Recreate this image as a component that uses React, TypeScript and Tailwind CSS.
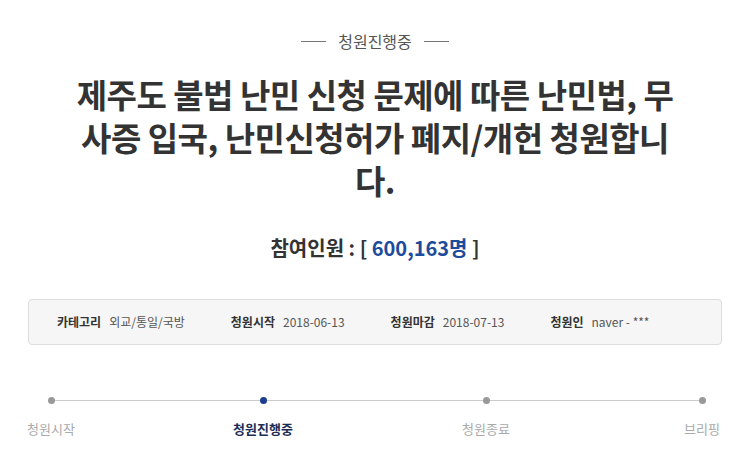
const steps = [
  { label: '청원시작', active: false, ml: 'ml-0' },
  { label: '청원진행중', active: true, ml: 'ml-[152px]' },
  { label: '청원종료', active: false, ml: 'ml-[163px]' },
  { label: '브리핑', active: false, ml: 'ml-[156px]' },
];

const info = [
  { label: '카테고리', value: '외교/통일/국방' },
  { label: '청원시작', value: '2018-06-13' },
  { label: '청원마감', value: '2018-07-13' },
  { label: '청원인', value: 'naver - ***' },
];

export default function App() {
  return (
    <div
      className="w-[750px] h-[461px] bg-white overflow-hidden"
      style={{ fontFamily: '"Noto Sans CJK KR", "Noto Sans", sans-serif' }}
    >
      {/* status heading */}
      <div className="flex items-center justify-center gap-3 pt-[29px]">
        <span className="w-[25px] h-px bg-[#777]" />
        <span className="text-[16px] leading-6 text-[#555]">청원진행중</span>
        <span className="w-[25px] h-px bg-[#777]" />
      </div>

      <h1 className="mx-auto mt-[20px] max-w-[610px] text-center text-[33px] font-bold leading-[43px] text-[#333] tracking-[-0.5px]">
        제주도 불법 난민 신청 문제에 따른 난민법, 무사증 입국, 난민신청허가 폐지/개헌 청원합니다.
      </h1>

      <div className="mt-[32px] text-center text-[20px] font-bold leading-7 text-[#333]">
        참여인원 : [ <span className="text-[#1d4b9b]">600,163명</span> ]
      </div>

      <div className="mx-[28px] mt-[37px] flex h-[46px] items-center gap-[46px] rounded border border-[#ddd] bg-[#f6f6f6] pl-[28px] text-[12px]">
        {info.map((it) => (
          <div key={it.label} className="flex items-center gap-2">
            <span className="font-bold text-[#333]">{it.label}</span>
            <span className="text-[#555]">{it.value}</span>
          </div>
        ))}
      </div>

      <div className="relative mt-[52px] pl-[21px]">
        <div className="absolute left-[51px] right-[48px] top-[3px] h-px bg-[#ccc]" />
        <div className="relative flex">
          {steps.map((s) => (
            <div key={s.label} className={`${s.ml} flex w-[60px] flex-col items-center`}>
              <span
                className={`h-[7px] w-[7px] rounded-full ${s.active ? 'bg-[#1d3f8c]' : 'bg-[#999]'}`}
              />
              <span
                className={`mt-[15px] whitespace-nowrap text-[13px] leading-5 ${
                  s.active ? 'font-bold text-[#1e2d55]' : 'text-[#aaa]'
                }`}
              >
                {s.label}
              </span>
            </div>
          ))}
        </div>
      </div>
    </div>
  );
}
